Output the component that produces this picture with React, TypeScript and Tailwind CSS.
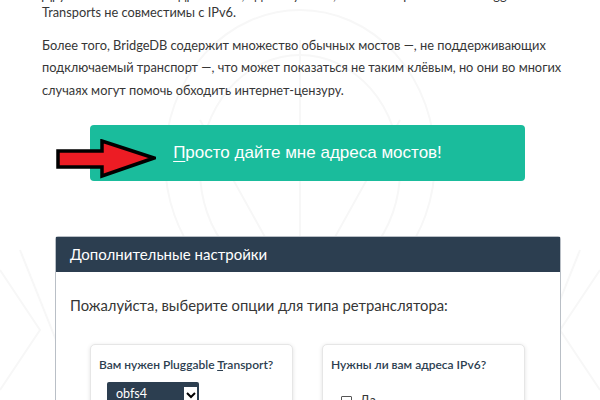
import React from "react";

function Arrow() {
  return (
    <svg width="100" height="40" viewBox="0 0 100 40" className="absolute left-[-34px] top-[14px]">
      <path
        d="M2 12 L46 12 L46 2 L98 19 L46 37 L46 28 L2 28 Z"
        fill="#ec1c24"
        stroke="#000"
        strokeWidth="3.5"
        strokeLinejoin="miter"
      />
    </svg>
  );
}

function Watermark() {
  return (
    <svg
      width="600"
      height="400"
      viewBox="0 0 600 400"
      className="absolute left-0 top-0 pointer-events-none"
      fill="none"
      stroke="#f7f7f7"
      strokeWidth="2"
    >
      <ellipse cx="300" cy="160" rx="135" ry="150" />
      <ellipse cx="300" cy="170" rx="100" ry="115" />
      <path d="M300 40 L300 300" />
      <path d="M200 120 L300 300 L400 120" />
      <path d="M0 270 L40 330 L0 390" />
      <path d="M600 270 L560 330 L600 390" />
      <path d="M20 250 L80 400" />
      <path d="M580 250 L520 400" />
    </svg>
  );
}

export default function App() {
  return (
    <div
      className="relative w-[600px] h-[400px] overflow-hidden bg-white text-[#363636]"
      style={{ fontFamily: "Lato, 'Liberation Sans', sans-serif" }}
    >
      <Watermark />
      <div className="relative mt-[-12.75px] pl-[42px] pr-[20px]">
        <p className="text-[12.8px] leading-[16.5px] whitespace-nowrap">
          Другие мосты имеют адреса IPv6, однако учтите, что некоторые из этих Pluggable
          <br />
          Transports не совместимы с IPv6.
        </p>
        <p className="mt-[13.5px] text-[12.8px] leading-[22.5px] whitespace-nowrap">
          Более того, BridgeDB содержит множество обычных мостов —, не поддерживающих
          <br />
          подключаемый транспорт —, что может показаться не таким клёвым, но они во многих
          <br />
          случаях могут помочь обходить интернет-цензуру.
        </p>

        <div className="mt-[23.5px] ml-[48px] relative w-[435px]">
          <Arrow />
          <button
            className="h-[56px] w-[435px] rounded-[4px] bg-[#1abc9c] text-white text-[17px] flex items-center justify-center"
            style={{ fontFamily: "'Liberation Sans', Arial, sans-serif" }}
          >
            <span>
              <span className="underline underline-offset-[3px]">П</span>росто дайте мне адреса мостов!
            </span>
          </button>
        </div>
      </div>

      <div className="relative ml-[55px] mt-[55px] w-[506px] rounded-t-[3px] border border-[#b9bfc6] bg-white">
        <div className="h-[35px] bg-[#2c3e50] px-[14px] flex items-center text-white text-[15px]">
          Дополнительные настройки
        </div>
        <div className="px-[14px] pt-[21px] text-[14.8px] leading-[24px]">
          Пожалуйста, выберите опции для типа ретранслятора:
        </div>
        <div className="mt-[27px] flex gap-[29px] pl-[34px]">
          <div className="w-[203px] h-[80px] rounded-[5px] border border-[#e6e6e6] bg-white shadow-[0_1px_4px_rgba(0,0,0,0.12)] px-[8px] pt-[11px]">
            <div className="text-[12px] leading-[18px] font-semibold text-[#2c3e50] whitespace-nowrap">
              Вам нужен Pluggable <span className="underline">T</span>ransport?
            </div>
            <div className="mt-[8px] ml-[8px] w-[92px] h-[26px] rounded-[2px] bg-[#2c3e50] flex items-center justify-between pl-[9px] pr-[2px]">
              <span className="text-white text-[12.5px]">obfs4</span>
              <span className="w-[13px] h-[15px] bg-white flex items-center justify-center">
                <svg width="10" height="8" viewBox="0 0 10 8">
                  <path d="M1 2 L5 6 L9 2" stroke="#000" strokeWidth="2" fill="none" />
                </svg>
              </span>
            </div>
          </div>
          <div className="w-[203px] h-[80px] rounded-[5px] border border-[#e6e6e6] bg-white shadow-[0_1px_4px_rgba(0,0,0,0.12)] px-[8px] pt-[11px]">
            <div className="text-[12px] leading-[18px] font-semibold text-[#2c3e50] whitespace-nowrap">
              Нужны ли вам адреса IPv6?
            </div>
            <div className="mt-[18px] ml-[10px] flex items-center gap-[8px]">
              <span className="w-[11px] h-[11px] border border-[#555] rounded-[1px] bg-white"></span>
              <span className="text-[12.5px]">Да</span>
            </div>
          </div>
        </div>
      </div>
    </div>
  );
}
